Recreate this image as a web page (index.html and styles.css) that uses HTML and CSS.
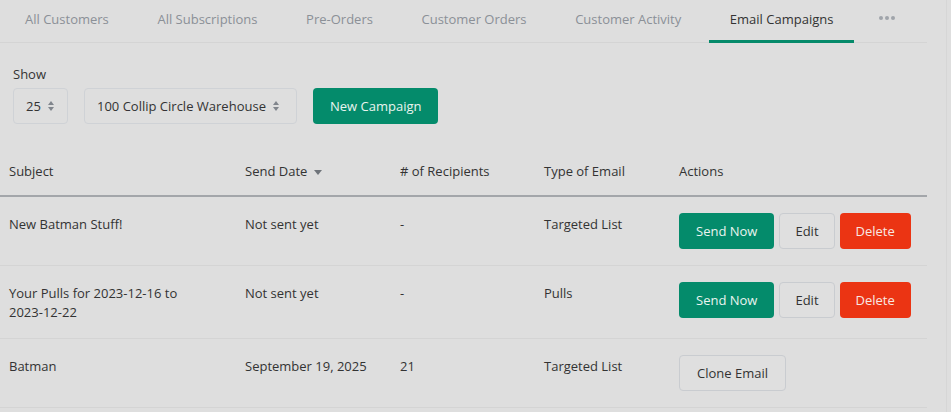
FILE: index.html
```html
<!DOCTYPE html>
<html lang="en">
<head>
    <meta charset="UTF-8">
    <meta name="viewport" content="width=device-width, initial-scale=1.0">
    <title>Email Campaigns</title>
    <link rel="stylesheet" href="styles.css">
</head>
<body>
    <div class="page">
        <!-- Tabs -->
        <nav class="tabs">
            <a class="tab" href="#">All Customers</a>
            <a class="tab" href="#">All Subscriptions</a>
            <a class="tab" href="#">Pre-Orders</a>
            <a class="tab" href="#">Customer Orders</a>
            <a class="tab" href="#">Customer Activity</a>
            <a class="tab active" href="#">Email Campaigns</a>
            <a class="tab more" href="#" aria-label="More">
                <span class="dot"></span><span class="dot"></span><span class="dot"></span>
            </a>
        </nav>

        <!-- Toolbar -->
        <div class="toolbar">
            <label class="show-label">Show</label>
            <div class="toolbar-row">
                <div class="select select-small">25 <span class="caret"></span></div>
                <div class="select select-wide">100 Collip Circle Warehouse <span class="caret"></span></div>
                <button class="btn btn-green btn-new">New Campaign</button>
            </div>
        </div>

        <!-- Campaigns table -->
        <table class="campaigns">
            <thead>
                <tr>
                    <th class="col-subject">Subject</th>
                    <th class="col-date">Send Date <span class="sort"></span></th>
                    <th class="col-count"># of Recipients</th>
                    <th class="col-type">Type of Email</th>
                    <th class="col-actions">Actions</th>
                </tr>
            </thead>
            <tbody>
                <tr>
                    <td class="subject">New Batman Stuff!</td>
                    <td>Not sent yet</td>
                    <td>-</td>
                    <td>Targeted List</td>
                    <td class="actions">
                        <div class="action-group">
                            <button class="btn btn-green">Send Now</button>
                            <button class="btn btn-light">Edit</button>
                            <button class="btn btn-red">Delete</button>
                        </div>
                    </td>
                </tr>
                <tr>
                    <td class="subject">Your Pulls for 2023-12-16 to 2023-12-22</td>
                    <td>Not sent yet</td>
                    <td>-</td>
                    <td>Pulls</td>
                    <td class="actions">
                        <div class="action-group">
                            <button class="btn btn-green">Send Now</button>
                            <button class="btn btn-light">Edit</button>
                            <button class="btn btn-red">Delete</button>
                        </div>
                    </td>
                </tr>
                <tr>
                    <td class="subject">Batman</td>
                    <td>September 19, 2025</td>
                    <td>21</td>
                    <td>Targeted List</td>
                    <td class="actions">
                        <div class="action-group">
                            <button class="btn btn-light btn-clone">Clone Email</button>
                        </div>
                    </td>
                </tr>
            </tbody>
        </table>
    </div>
</body>
</html>
```

FILE: styles.css
```css
/* Global */
body {
    margin: 0;
    background: #dedede;
    font-family: "Open Sans", "Noto Sans", sans-serif;
    font-size: 13px;
    color: #333;
}

.page {
    width: 927px;
    min-height: 412px;
    border-right: 1px solid #d6d6d6;
    padding-right: 19px;
}

/* Tabs */
.tabs {
    display: flex;
    height: 42px;
    border-bottom: 1px solid #d4d4d4;
    padding-left: 4px;
    gap: 6.6px;
}

.tab {
    display: flex;
    align-items: center;
    padding: 0 21px 2px;
    color: #8b9097;
    text-decoration: none;
    border-bottom: 3px solid transparent;
    margin-bottom: -1px;
}

.tab.active {
    color: #333;
    border-bottom-color: #058a6a;
}

.tab.more {
    gap: 2px;
    padding-bottom: 5px;
    padding-left: 18px;
}

.dot {
    width: 4px;
    height: 4px;
    border-radius: 50%;
    background: #a0a4aa;
}

/* Toolbar */
.toolbar {
    padding: 22px 13px 0;
}

.show-label {
    display: block;
    line-height: 18px;
    margin-bottom: 5px;
}

.toolbar-row {
    display: flex;
    gap: 16px;
}

.select {
    display: flex;
    align-items: center;
    gap: 7px;
    height: 36px;
    padding: 0 12px;
    border: 1px solid #cfd2d6;
    border-radius: 4px;
    box-sizing: border-box;
}

.select-small {
    width: 55px;
}

.select-wide {
    width: 213px;
}

.caret {
    display: inline-flex;
    flex-direction: column;
    gap: 2px;
}

.caret::before,
.caret::after {
    content: "";
    border-left: 3px solid transparent;
    border-right: 3px solid transparent;
}

.caret::before {
    border-bottom: 4px solid #80858c;
}

.caret::after {
    border-top: 4px solid #80858c;
}

/* Buttons */
.btn {
    font-family: inherit;
    font-size: 13px;
    height: 36px;
    padding: 0 16px;
    border-radius: 4px;
    border: 1px solid transparent;
    cursor: pointer;
}

.btn-green {
    background: #048b6b;
    color: #eaf4ef;
}

.btn-red {
    background: #eb3413;
    color: #f8e8e3;
    padding: 0 15px;
}

.btn-light {
    background: #dfdfdf;
    border-color: #c9ccd0;
    color: #333;
    padding: 0 15px;
}

.btn-light.btn-clone {
    padding: 0 17px;
}

/* Table */
.campaigns {
    width: 927px;
    border-collapse: collapse;
    margin-top: 24px;
}

.campaigns th {
    text-align: left;
    font-weight: normal;
    padding: 14px 9px 15px;
    line-height: 18px;
    border-bottom: 2px solid #a3a6aa;
}

.campaigns td {
    vertical-align: top;
    padding: 18px 9px 16px;
    line-height: 19px;
    border-bottom: 1px solid #d4d4d4;
}

.campaigns td.subject {
    padding-right: 40px;
}

.col-subject { width: 218px; }
.col-date { width: 137px; }
.col-count { width: 126px; }
.col-type { width: 117px; }

.sort {
    display: inline-block;
    vertical-align: middle;
    margin-left: 3px;
    border-left: 4px solid transparent;
    border-right: 4px solid transparent;
    border-top: 5px solid #6f747a;
}

.campaigns td.actions {
    padding-top: 16px;
}

.action-group {
    display: flex;
    gap: 5px;
}
```
